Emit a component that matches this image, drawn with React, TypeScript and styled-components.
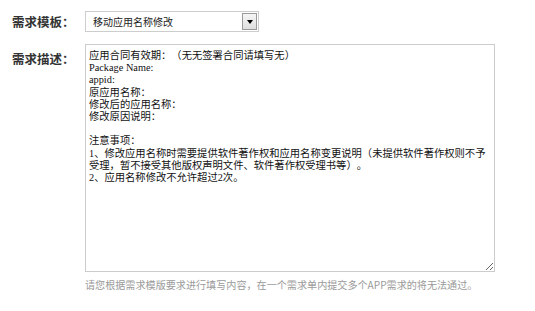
import styled, { createGlobalStyle } from "styled-components";

const GlobalStyle = createGlobalStyle`
  html, body {
    margin: 0;
    padding: 0;
    background: #fff;
  }
  body {
    font-family: "Noto Sans CJK SC", "Liberation Sans", sans-serif;
    color: #333;
    text-spacing-trim: space-all;
  }
`;

const Form = styled.form`
  padding: 11px 0 0 12px;
`;

const Row = styled.div<{ $top?: boolean }>`
  display: flex;
  align-items: ${(p) => (p.$top ? "flex-start" : "center")};
  margin-bottom: 12px;
`;

const Label = styled.label<{ $offset?: number }>`
  width: 73px;
  flex: none;
  font-size: 12.5px;
  font-weight: bold;
  color: #333;
  line-height: 14px;
  margin-top: ${(p) => p.$offset ?? 0}px;
`;

const Field = styled.div`
  display: flex;
  flex-direction: column;
`;

const SelectBox = styled.div`
  box-sizing: border-box;
  width: 174px;
  height: 21px;
  border: 1px solid #cdcdcd;
  background: #fff;
  display: flex;
  align-items: center;
  justify-content: space-between;
  padding: 1px 1px 1px 7px;
`;

const SelectText = styled.span`
  font-size: 10px;
  color: #222;
  line-height: 12px;
`;

const DropButton = styled.span`
  box-sizing: border-box;
  width: 15px;
  height: 100%;
  border: 1px solid #9a9a9a;
  background: linear-gradient(#f6f6f6, #dedede);
  display: flex;
  align-items: center;
  justify-content: center;

  &::after {
    content: "";
    width: 0;
    height: 0;
    border-left: 3.5px solid transparent;
    border-right: 3.5px solid transparent;
    border-top: 4px solid #000;
  }
`;

const TextArea = styled.textarea`
  box-sizing: border-box;
  width: 410px;
  height: 228px;
  margin: 0;
  border: 1px solid #cccccc;
  padding: 5px 4px 0 3px;
  font-family: "Liberation Serif", "Noto Sans CJK SC", serif;
  font-size: 10.3px;
  line-height: 12.2px;
  color: #111;
  resize: both;
  outline: none;
  overflow: hidden;
  text-spacing-trim: space-all;
`;

const Hint = styled.p`
  margin: 6px 0 0;
  font-size: 10.1px;
  line-height: 13px;
  color: #9a9a9a;
`;

const description = `应用合同有效期：（无无签署合同请填写无）
Package Name:
appid:
原应用名称：
修改后的应用名称：
修改原因说明：

注意事项：
1、修改应用名称时需要提供软件著作权和应用名称变更说明（未提供软件著作权则不予受理，暂不接受其他版权声明文件、软件著作权受理书等）。
2、应用名称修改不允许超过2次。`;

export default function App() {
  return (
    <>
      <GlobalStyle />
      <Form>
        <Row>
          <Label>需求模板：</Label>
          <SelectBox>
            <SelectText>移动应用名称修改</SelectText>
            <DropButton />
          </SelectBox>
        </Row>
        <Row $top>
          <Label $offset={8}>需求描述：</Label>
          <Field>
            <TextArea readOnly defaultValue={description} />
            <Hint>请您根据需求模版要求进行填写内容，在一个需求单内提交多个APP需求的将无法通过。</Hint>
          </Field>
        </Row>
      </Form>
    </>
  );
}
